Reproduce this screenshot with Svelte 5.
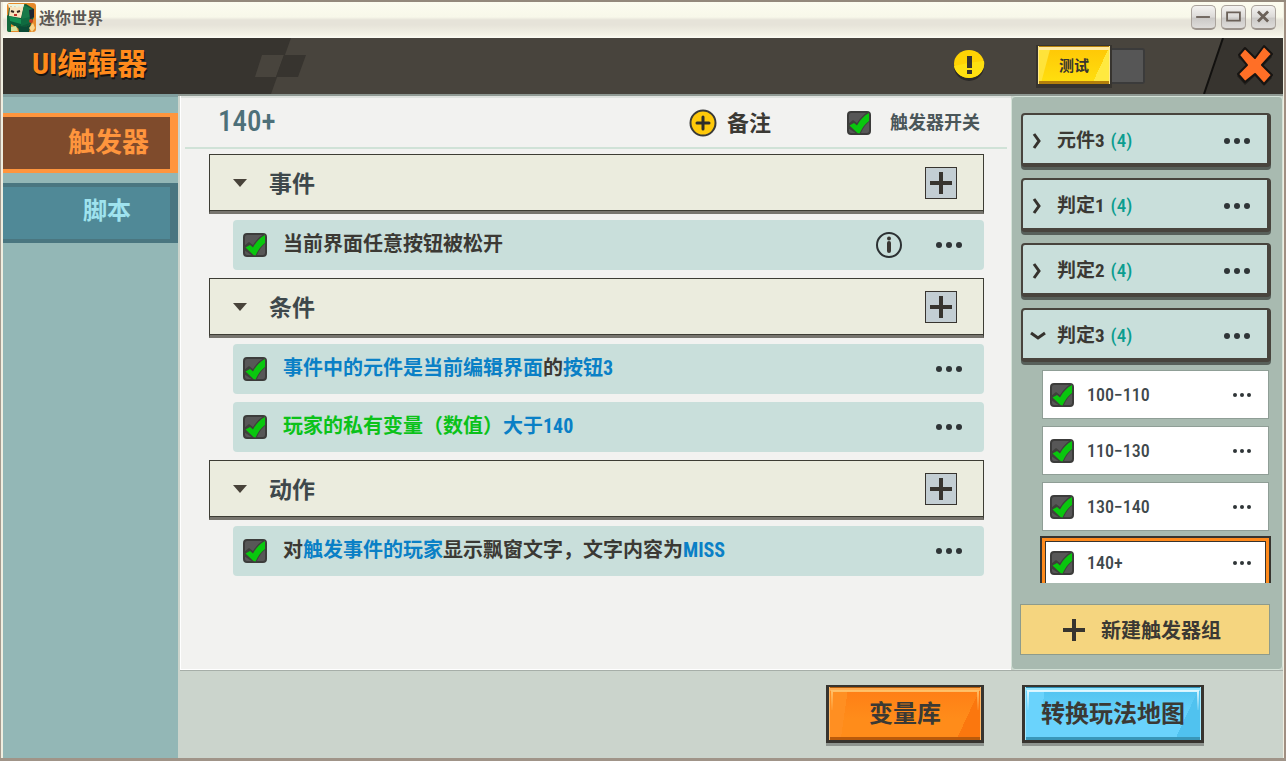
<script>
  const sections = [
    {
      title: '事件',
      rows: [{ info: true, parts: [['当前界面任意按钮被松开', 'ink']] }]
    },
    {
      title: '条件',
      rows: [
        { parts: [['事件中的元件是当前编辑界面', 'blue'], ['的', 'ink'], ['按钮3', 'blue']] },
        { parts: [['玩家的私有变量（数值）', 'green'], ['大于140', 'blue']] }
      ]
    },
    {
      title: '动作',
      rows: [
        {
          parts: [
            ['对', 'ink'],
            ['触发事件的玩家', 'blue'],
            ['显示飘窗文字，文字内容为', 'ink'],
            ['MISS', 'blue']
          ]
        }
      ]
    }
  ];

  const groups = [
    { name: '元件3', count: 4, open: false },
    { name: '判定1', count: 4, open: false },
    { name: '判定2', count: 4, open: false },
    { name: '判定3', count: 4, open: true }
  ];

  const triggers = ['100-110', '110-130', '130-140', '140+'];
  let selected = $state('140+');
</script>

{#snippet check(label)}
  <span class="check">
    <input type="checkbox" checked aria-label={label} />
    <svg viewBox="0 0 24 24" aria-hidden="true">
      <path class="shade" d="M1 13 6 9l4 3C13 7 17 3 21 1h2v9C19 13 16 17 14 22L10 23 1 17z" />
      <path class="tick" d="M2.500 14.500 7 12l3 2.500C13 9 17 4.500 22 2v8c-4 3-7 7-9.500 12.500L10.500 22z" />
    </svg>
  </span>
{/snippet}

{#snippet dots(small)}
  <button class="dots" class:small aria-label="更多"><i></i><i></i><i></i></button>
{/snippet}

<div class="window">
  <header class="titlebar">
    <svg class="logo" viewBox="0 0 29 29" aria-hidden="true">
      <rect width="29" height="29" rx="3" fill="#e58a2a" />
      <path d="M0 12l4 3v14H2q-2 0-2-2z" fill="#12683c" />
      <path d="M2 5 19 1l8 5v8l-3 7-10 6-10-6-3-8z" fill="#0d5b38" />
      <path d="M3 4 17 2l-3 13-12-2z" fill="#f8e3bd" />
      <path d="M2 5 1 1h16v3l-2-1-1 2-2-2-2 2-2-2-2 2-2-2z" fill="#e9f3e0" />
      <path d="M17 2l8 4-2 11-9 1z" fill="#187a49" />
      <path d="M2 13l12 3v5L3 18z" fill="#159053" />
      <path d="M14 16l9-2v6l-9 3z" fill="#0f6a40" />
      <path d="M22 7l5-1v8l-4 2z" fill="#1c2430" />
      <circle cx="24" cy="18" r="2" fill="#c33f20" />
      <path d="M4 8l3 1M10 9l3-1" stroke="#35221b" stroke-width="2" />
      <path d="M7 11h3v2H7z" fill="#c0302a" />
      <path d="M4 24l5-1 2 5H4z" fill="#d5e39c" />
      <path d="M11 23l7 1 6-3-2 8H12z" fill="#0a4a35" />
      <path d="M22 25l4-5 2 5-3 4z" fill="#f8d58a" />
    </svg>
    <span class="apptitle">迷你世界</span>
    <div class="winbtns">
      <button aria-label="最小化"><svg viewBox="0 0 24 24"><path d="M4 12h15" /></svg></button>
      <button aria-label="最大化"><svg viewBox="0 0 24 24"><path d="M5 7h14v9H5z" /></svg></button>
      <button aria-label="关闭"><svg viewBox="0 0 24 24"><path d="M6 6l11 11M17 6 6 17" stroke-width="3" /></svg></button>
    </div>
  </header>

  <div class="topbar">
    <svg class="deco" viewBox="0 0 310 56" aria-hidden="true">
      <path d="M0 0H288L268 56H0z" fill="#37342f" />
      <path d="M259 17h22l-8 22h-21z" fill="#48443d" />
      <path d="M281 17h22l-8 22h-22z" fill="#37342f" />
    </svg>
    <h1>UI编辑器</h1>
    <button class="warn" aria-label="提示">
      <svg viewBox="0 0 32 32">
        <ellipse cx="16" cy="16" rx="15" ry="15" fill="#2b2a28" />
        <ellipse cx="16" cy="14" rx="15" ry="14" fill="#ffd304" />
        <path d="M1 16Q16 12 31 11A15 14 0 0 1 1 16z" fill="#fee011" />
        <path d="M14 6h5v12h-5zM14 20h5v4h-5z" fill="#37342f" />
      </svg>
    </button>
    <div class="switch">
      <button class="test">测试</button>
      <span class="track"></span>
    </div>
    <div class="corner">
      <svg class="slash" viewBox="0 0 80 56" preserveAspectRatio="none" aria-hidden="true">
        <path d="M20 0h60v56H1z" fill="#37342f" />
        <path d="M20 0 1 56" stroke="#12110f" stroke-width="2" />
      </svg>
      <button class="close" aria-label="关闭编辑器">
        <svg viewBox="0 0 38 42">
          <path d="M9 5l10 10L28 4l8 9-10 10 10 11-8 8-9-10-10 9-8-9 10-10L2 13z" fill="#22201d" />
          <path d="M9 4l10 10L28 2l8 8-10 11 10 10-8 9-9-10-10 8-7-8 9-9L3 11z" fill="#ff6f26" stroke="#161412" stroke-width="2" stroke-linejoin="round" />
        </svg>
      </button>
    </div>
  </div>

  <div class="body">
    <nav class="side">
      <button class="tab active">触发器</button>
      <button class="tab">脚本</button>
    </nav>

    <div class="work">
      <div class="panels">
        <main class="editor">
          <div class="edhead">
            <h2>140+</h2>
            <button class="note">
              <svg viewBox="0 0 28 28" aria-hidden="true">
                <circle cx="14" cy="14" r="12.500" fill="#ffc90a" stroke="#3a3a38" stroke-width="2" />
                <path d="M14 8v12M8 14h12" stroke="#2f2e2a" stroke-width="3" stroke-linecap="round" />
              </svg>
              <span>备注</span>
            </button>
            <label class="toggle">{@render check('触发器开关')}触发器开关</label>
          </div>
          <div class="list">
            {#each sections as s}
              <section>
                <div class="sechead">
                  <svg class="tri" viewBox="0 0 14 8" aria-hidden="true"><path d="M0 0h14L7 8z" fill="#48433a" /></svg>
                  <h3>{s.title}</h3>
                  <button class="add" aria-label="添加{s.title}">
                    <svg viewBox="0 0 30 30"><path d="M15 4v22M4 15h22" stroke="#37342f" stroke-width="4" /></svg>
                  </button>
                </div>
                {#each s.rows as r}
                  <div class="row">
                    {@render check('启用')}
                    <p>{#each r.parts as [t, c]}<span class={c}>{t}</span>{/each}</p>
                    {#if r.info}
                      <button class="info" aria-label="说明">
                        <svg viewBox="0 0 26 26">
                          <circle cx="13" cy="13" r="12" fill="none" stroke="#2c3133" stroke-width="2" />
                          <path d="M13 11v8" stroke="#3a3733" stroke-width="4" stroke-linecap="round" />
                          <circle cx="13" cy="6.500" r="2" fill="#3a3733" />
                        </svg>
                      </button>
                    {/if}
                    {@render dots(false)}
                  </div>
                {/each}
              </section>
            {/each}
          </div>
        </main>

        <aside class="groups">
          <div class="scroll">
            {#each groups as g}
              <div class="group">
                <button class="expand" aria-expanded={g.open}>
                  <svg class="chev" viewBox="0 0 16 16" aria-hidden="true">
                    {#if g.open}<path d="M1 5l7 5 7-5" />{:else}<path d="M4 1l5 7-5 7" />{/if}
                  </svg>
                  <span class="gname">{g.name}<em>({g.count})</em></span>
                </button>
                {@render dots(false)}
              </div>
            {/each}
            <ul>
              {#each triggers as t}
                <li class:sel={t === selected}>
                  {@render check(t)}
                  <button class="pick" onclick={() => (selected = t)}>{t.replace('-', '−')}</button>
                  {@render dots(true)}
                </li>
              {/each}
            </ul>
          </div>
          <button class="newgroup">
            <svg viewBox="0 0 22 22" aria-hidden="true"><path d="M11 0v22M0 11h22" stroke="#37342f" stroke-width="4" /></svg>
            新建触发器组
          </button>
        </aside>
      </div>

      <footer>
        <button class="big orange">变量库</button>
        <button class="big sky">转换玩法地图</button>
      </footer>
    </div>
  </div>
</div>

<style>
  :global(body) { margin: 0; }
  * { box-sizing: border-box; }
  button { font: inherit; color: inherit; border: 0; padding: 0; background: none; cursor: pointer; }
  svg { display: block; }
  h1, h2, h3, p, ul { margin: 0; padding: 0; font-weight: inherit; }

  .window {
    min-height: 100vh;
    display: flex;
    flex-direction: column;
    padding: 0 3px 3px;
    border-top: 2px solid #94897c;
    background: linear-gradient(90deg, #a59a8e 1px, #efeee0 1px, #efeee0 calc(100% - 2px), #a08f82 calc(100% - 2px));
    box-shadow: inset 0 -3px #a09488;
    font-family: "Roboto Condensed", "Liberation Sans Narrow", Roboto, "Noto Sans CJK SC", sans-serif;
    color: #3b3934;
  }

  .titlebar {
    height: 36px;
    display: flex;
    align-items: center;
    gap: 3px;
    padding: 0 7px 6px 4px;
    background: linear-gradient(#fcfcef 0, #f8f8ea 15px, #e6e3d9 18px, #e6e3d9 23px, #f4f2e6 33px, #fdfdf5);
    font: 500 16px "Noto Sans CJK SC", sans-serif;
  }
  .logo { width: 29px; height: 29px; }
  .apptitle { color: #5b5854; line-height: 24px; font-weight: 700; }
  .winbtns { margin-left: auto; display: flex; gap: 5px; }
  .winbtns button {
    width: 25px;
    height: 25px;
    border: 1px solid #aaa39c;
    border-bottom: 2px solid #9c948d;
    border-radius: 5px;
    background: linear-gradient(#f4f3f1, #dcdad8 50%, #cbc9c7 55%, #dedcda);
  }
  .winbtns svg { width: 23px; height: 22px; fill: none; stroke: #6b6159; stroke-width: 2; }

  .topbar {
    position: relative;
    height: 56px;
    display: flex;
    align-items: center;
    background: #48443d;
  }
  .deco { position: absolute; left: 0; top: 0; width: 310px; height: 56px; }
  h1 {
    position: relative;
    flex: 1;
    padding: 0 0 5px 29px;
    font-size: 30px;
    line-height: 44px;
    font-weight: 700;
    color: #ff8a1c;
    text-shadow: 1px 2px #161310;
  }
  .warn svg { width: 32px; height: 32px; }
  .switch { display: flex; align-items: center; margin: 0 58px 0 51px; }
  .test {
    width: 76px;
    height: 43px;
    border: 2px solid #37342f;
    border-width: 1px 2px 4px;
    background:
      linear-gradient(#b5800a 0 1px, #ffe9a0 1px 4px, transparent 4px calc(100% - 3px), #b5800a calc(100% - 3px)),
      linear-gradient(105deg, #ffe33a 0 12px, transparent 13px),
      linear-gradient(115deg, transparent 80%, #ffe940 80%),
      linear-gradient(#ffc605, #ffe00f);
    box-shadow: inset 1px 0 #ffe98a, inset -1px 0 #ffe98a;
    font-size: 15px;
    font-weight: 700;
    color: #37342f;
  }
  .track {
    width: 33px;
    height: 36px;
    border: 2px solid #3b3b3b;
    border-left: 0;
    border-radius: 0 3px 3px 0;
    background: #565656;
  }
  .corner { position: relative; width: 80px; height: 56px; padding: 6px 0 0 33px; }
  .slash { position: absolute; inset: 0; width: 80px; height: 56px; }
  .close { position: relative; }
  .close svg { width: 38px; height: 42px; }

  .body { flex: 1; display: flex; }
  .side {
    width: 175px;
    display: flex;
    flex-direction: column;
    gap: 10px;
    padding-top: 19px;
    background: #93b7b6;
    box-shadow: inset 0 3px #819f9f;
  }
  .tab {
    height: 60px;
    padding: 0 39px 4px 0;
    text-align: right;
    border: solid #4a7680;
    border-width: 4px 8px 4px 0;
    background: #508997;
    color: #9fe3ee;
    font-size: 24px;
    line-height: 32px;
    font-weight: 700;
  }
  .tab.active {
    border-color: #ff953d;
    background: #7f4b2c;
    color: #ff953d;
    font-size: 27px;
    padding: 0 21px 0 0;
  }

  .work {
    flex: 1;
    min-width: 0;
    display: flex;
    flex-direction: column;
    background: #cbd4cc;
    padding-left: 2px;
    box-shadow: inset 0 2px #8f9993;
  }
  .panels { flex: 1; display: flex; margin-top: 2px; border-bottom: 1px solid #a6aea8; }
  .editor {
    flex: 1;
    min-width: 0;
    background: #f2f2f0;
    border: solid #fff;
    border-width: 0 0 1px 1px;
    padding-left: 4px;
    box-shadow: inset 0 2px #dfe3df;
  }
  .edhead {
    height: 53px;
    display: flex;
    align-items: center;
    margin-right: 4px;
    padding: 3px 27px 0 33px;
    border-bottom: 2px solid #d0e2d7;
  }
  h2 { flex: 1; font-size: 29px; line-height: 36px; font-weight: 500; color: #4d7079; padding-bottom: 4px; }
  .note { display: flex; align-items: center; gap: 10px; font-size: 22px; line-height: 28px; font-weight: 700; }
  .note span { padding-top: 2px; }
  .note svg { width: 28px; height: 28px; }
  .toggle { display: flex; align-items: center; gap: 19px; margin-left: 76px; font-size: 18px; line-height: 24px; font-weight: 700; color: #4a5659; }

  .check { position: relative; flex: none; width: 24px; height: 24px; }
  .check input {
    appearance: none;
    display: block;
    width: 24px;
    height: 24px;
    margin: 0;
    border-radius: 4px;
    border: 2px solid #3c3c3b;
    background: #575757;
  }
  .check svg { position: absolute; inset: 0; width: 24px; height: 24px; pointer-events: none; }
  .shade { fill: #3f403c; }
  .tick { fill: #09c70e; }

  .list { padding: 5px 27px 0 24px; }
  .sechead {
    height: 60px;
    display: flex;
    align-items: center;
    margin-bottom: 6px;
    padding: 0 26px 0 23px;
    border: 1px solid #3d3d34;
    border-bottom: 3px solid #77756e;
    background: #ebecde;
    box-shadow: inset 0 -1px #3d3d34;
  }
  .tri { width: 14px; height: 8px; }
  h3 { flex: 1; padding: 4px 0 0 22px; font-size: 23px; line-height: 30px; font-weight: 700; color: #3e484b; }
  .add { width: 32px; height: 32px; border: 1px solid #37342f; background: #c3ced3; }
  .add svg { width: 30px; height: 30px; }
  .row {
    height: 50px;
    display: flex;
    align-items: center;
    margin: 0 0 8px 24px;
    padding: 0 19px 0 10px;
    border-radius: 4px;
    background: #c9dfdb;
  }
  .row p { flex: 1; padding: 0 0 2px 16px; font-size: 20px; line-height: 26px; font-weight: 700; }
  .ink { color: #3b3934; }
  .blue { color: #0a80c6; }
  .green { color: #0bc21a; }
  .info { margin-right: 31px; }
  .info svg { width: 26px; height: 26px; }

  .dots { flex: none; display: flex; align-items: center; gap: 4px; height: 24px; padding: 0 3px; }
  .dots i { width: 6px; height: 6px; border-radius: 50%; background: #2f3537; }
  .dots.small { gap: 3px; }
  .dots.small i { width: 4px; height: 4px; }

  .groups {
    width: 272px;
    flex: none;
    display: flex;
    flex-direction: column;
    padding: 16px 11px 15px 8px;
    border: 1px solid #d5e3d9;
    border-radius: 4px;
    background: #a8bab0;
  }
  .scroll { height: 470px; padding-left: 1px; overflow: hidden; }
  .group {
    height: 54px;
    display: flex;
    align-items: center;
    padding: 3px 14px 0 7px;
    border: 2px solid #48443d;
    border-width: 2px 4px 4px 2px;
    border-radius: 4px;
    background: #c9dfdb;
    box-shadow: 0 3px #58605a;
  }
  .group + .group { margin-top: 11px; }
  .expand { flex: 1; display: flex; align-items: center; gap: 11px; text-align: left; font-size: 19px; line-height: 26px; font-weight: 700; }
  .chev { width: 16px; height: 16px; fill: none; stroke: #35322d; stroke-width: 3; }
  .gname { display: flex; gap: 6px; }
  em { font-style: normal; font-weight: 500; color: #0b9d8f; }
  ul { list-style: none; padding: 9px 3px 0 22px; }
  li {
    height: 47px;
    display: flex;
    align-items: center;
    margin-bottom: 9px;
    padding: 0 14px 0 7px;
    background: #fff;
    box-shadow: 0 0 0 1px #8f9e96;
  }
  li.sel {
    box-shadow:
      inset 0 0 0 2px #ff8a1c,
      inset 0 0 0 3px #37342f,
      0 0 0 1px #ff8a1c,
      0 0 0 3px #37342f;
  }
  .pick { flex: 1; padding-left: 13px; text-align: left; font-size: 18px; line-height: 24px; font-weight: 500; color: #3f494c; }
  .newgroup {
    display: flex;
    align-items: center;
    justify-content: center;
    gap: 16px;
    height: 49px;
    margin: 22px 2px 0 1px;
    padding-right: 6px;
    background: #f5d57f;
    box-shadow: 0 0 0 1px #8d9b8c;
    font-size: 20px;
    font-weight: 700;
  }
  .newgroup svg { width: 22px; height: 22px; }

  footer { height: 87px; display: flex; justify-content: flex-end; gap: 38px; padding: 14px 79px 0 0; }
  .big {
    position: relative;
    height: 58px;
    padding: 0;
    border: 3px solid #37342f;
    border-top-width: 2px;
    font-size: 24px;
    line-height: 32px;
    font-weight: 700;
    color: #3b3934;
  }
  .big::before {
    content: "";
    position: absolute;
    inset: 3px 2px auto;
    height: 18px;
    border: 2px solid;
    border-bottom: 0;
    border-image: linear-gradient(var(--shine), transparent) 2;
  }
  .orange {
    --shine: #ffc26a;
    width: 158px;
    background:
      linear-gradient(#b35b0a 0 1px, #ffac52 1px 4px, transparent 4px calc(100% - 3px), #b95a0b calc(100% - 3px)),
      linear-gradient(98deg, #ff8f22 0 12%, transparent 12%),
      linear-gradient(115deg, transparent 86%, #fb770e 86%),
      linear-gradient(#ff7d15, #ff8c1a 60%);
    box-shadow: 0 3px #8f9590, inset 1px 0 #ffb766, inset -1px 0 #ffb766;
  }
  .sky {
    --shine: #e2f8ff;
    width: 182px;
    background:
      linear-gradient(#2d8db3 0 1px, #95e6ff 1px 4px, transparent 4px calc(100% - 3px), #3997b9 calc(100% - 3px)),
      linear-gradient(98deg, #6ad3fc 0 11%, transparent 11%),
      linear-gradient(115deg, transparent 87%, #50c2ef 87%),
      linear-gradient(#50c2ef, #6ad3fc 60%);
    box-shadow: 0 3px #8f9590, inset 1px 0 #a5eaff, inset -1px 0 #a5eaff;
  }
</style>
